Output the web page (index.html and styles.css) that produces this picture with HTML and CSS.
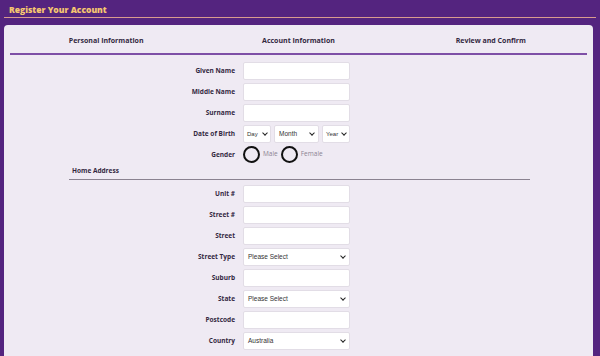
FILE: index.html
```html
<!DOCTYPE html>
<html lang="en">
<head>
    <meta charset="UTF-8">
    <meta name="viewport" content="width=device-width, initial-scale=1.0">
    <title>Register Your Account</title>
    <link rel="stylesheet" href="styles.css">
</head>
<body>

<div class="page-header">
    <h1>Register Your Account</h1>
</div>

<div class="card">
    <div class="steps">
        <div class="step">Personal Information</div>
        <div class="step">Account Information</div>
        <div class="step">Review and Confirm</div>
    </div>

    <form class="reg-form">
        <div class="row">
            <label>Given Name</label>
            <input type="text">
        </div>
        <div class="row">
            <label>Middle Name</label>
            <input type="text">
        </div>
        <div class="row">
            <label>Surname</label>
            <input type="text">
        </div>
        <div class="row">
            <label>Date of Birth</label>
            <div class="dob">
                <div class="select small"><span>Day</span><span class="caret"></span></div>
                <div class="select month"><span>Month</span><span class="caret"></span></div>
                <div class="select small"><span>Year</span><span class="caret"></span></div>
            </div>
        </div>
        <div class="row">
            <label>Gender</label>
            <div class="radios">
                <span class="radio"></span><span class="radio-text">Male</span>
                <span class="radio"></span><span class="radio-text">Female</span>
            </div>
        </div>

        <div class="section-title">Home Address</div>

        <div class="row">
            <label>Unit #</label>
            <input type="text">
        </div>
        <div class="row">
            <label>Street #</label>
            <input type="text">
        </div>
        <div class="row">
            <label>Street</label>
            <input type="text">
        </div>
        <div class="row">
            <label>Street Type</label>
            <div class="select wide"><span>Please Select</span><span class="caret"></span></div>
        </div>
        <div class="row">
            <label>Suburb</label>
            <input type="text">
        </div>
        <div class="row">
            <label>State</label>
            <div class="select wide"><span>Please Select</span><span class="caret"></span></div>
        </div>
        <div class="row">
            <label>Postcode</label>
            <input type="text">
        </div>
        <div class="row">
            <label>Country</label>
            <div class="select wide"><span>Australia</span><span class="caret"></span></div>
        </div>
    </form>
</div>

</body>
</html>
```

FILE: styles.css
```css
body {
    margin: 0;
    background-color: #54247f;
    font-family: "Open Sans", Arial, sans-serif;
    color: #33283f;
    overflow: hidden;
}

.page-header {
    margin: 0 4px;
    padding: 3px 5px 0;
    border-bottom: 1px solid #d99c8e;
}

.page-header h1 {
    margin: 0;
    font-size: 8.5px;
    line-height: 14px;
    font-weight: 800;
    color: #f6c770;
}

.card {
    margin: 7px 7px 0 4px;
    padding: 9px 6px 0;
    background-color: #efeaf3;
    border-radius: 4px 4px 0 0;
    height: 322px;
}

.steps {
    display: flex;
    border-bottom: 2px solid #7e4fa6;
    padding-bottom: 5px;
}

.step {
    flex: 1;
    text-align: center;
    font-size: 7px;
    font-weight: 700;
    line-height: 14px;
}

.reg-form {
    padding-top: 5px;
}

.row {
    display: flex;
    align-items: center;
    height: 21px;
}

.row label {
    width: 225px;
    text-align: right;
    padding-right: 8px;
    font-size: 6.5px;
    font-weight: 700;
}

.row input {
    width: 107px;
    height: 18px;
    box-sizing: border-box;
    border: 1px solid #e2dde6;
    border-radius: 2px;
    background: #fff;
    margin: 0;
    padding: 0;
}

.select {
    box-sizing: border-box;
    height: 18px;
    background: #fff;
    border: 1px solid #e2dde6;
    border-radius: 2px;
    display: flex;
    align-items: center;
    justify-content: space-between;
    padding: 0 4px;
    font-family: "Liberation Sans", Arial, sans-serif;
    font-size: 6.5px;
    color: #333;
}

.caret {
    flex: none;
    width: 3px;
    height: 3px;
    border-right: 1.2px solid #222;
    border-bottom: 1.2px solid #222;
    transform: rotate(45deg);
    margin-top: -2px;
}

.select.wide {
    width: 107px;
}

.dob {
    display: flex;
    gap: 3px;
}

.select.small {
    width: 28px;
    padding: 0 3px;
    font-size: 6px;
}

.select.month {
    width: 45px;
}

.radios {
    display: flex;
    align-items: center;
}

.radio {
    width: 13px;
    height: 13px;
    border: 2px solid #111;
    border-radius: 50%;
}

.radio-text {
    font-size: 6.5px;
    color: #8c8492;
    margin: -3px 3px 0 3px;
}

.section-title {
    margin: 2px 57px 3px 59px;
    padding: 0 0 4px 3px;
    border-bottom: 1px solid #8a8290;
    font-size: 6.5px;
    line-height: 8px;
    font-weight: 700;
}
```
